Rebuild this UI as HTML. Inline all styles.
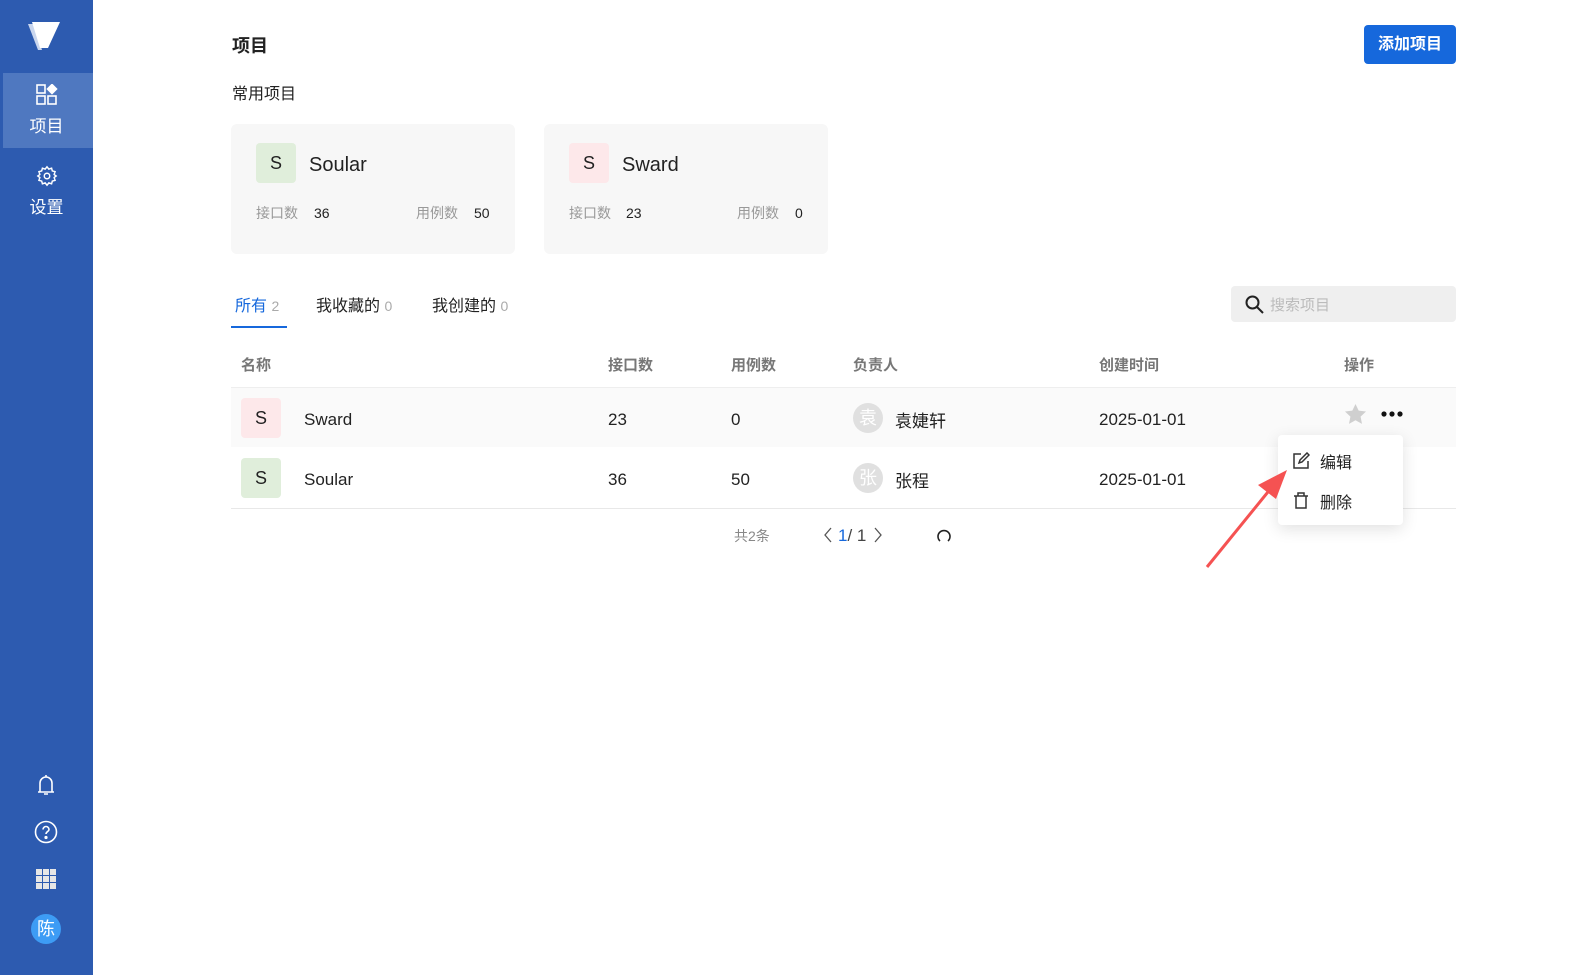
<!DOCTYPE html>
<html><head><meta charset="utf-8"><style>
*{box-sizing:border-box;margin:0;padding:0}
body{width:1595px;height:975px;background:#fff;font-family:"Liberation Sans","Noto Sans CJK SC",sans-serif;color:#222;position:relative;overflow:hidden}
.abs{position:absolute}
.side{left:0;top:0;width:93px;height:975px;background:#2d5bb0}
.act{left:3px;top:73px;width:90px;height:75px;background:#4f78c0}
.navt{width:93px;text-align:center;color:#fff;font-size:17px}
.card{background:#f7f7f7;border-radius:6px;width:284px;height:130px}
.sq{width:40px;height:40px;border-radius:4px;text-align:center;line-height:40px;font-size:18px;color:#222}
.g{background:#e0eedb}.p{background:#fde8ea}
.lbl{color:#999;font-size:14px}
.th{top:354px;font-size:15px;color:#777;font-weight:bold}
.td{font-size:17px;color:#222}
.av{width:30px;height:30px;border-radius:50%;background:#e0e0e0;color:#fff;text-align:center;line-height:30px;font-size:18px}
</style></head><body>
<div class="abs side"></div>
<div class="abs act"></div>
<svg class="abs" style="left:26px;top:18px" width="36" height="36" viewBox="0 0 36 36"><path d="M2 6 L12 32 L16 32 L8 6Z" fill="#c9d6ee"/><path d="M6 4 L34 4 L22 30 L14 30Z" fill="#fff"/></svg>
<svg class="abs" style="left:36px;top:84px" width="22" height="22" viewBox="0 0 22 22" fill="none" stroke="#fff" stroke-width="1.6"><rect x="1" y="1" width="8" height="8"/><rect x="1" y="12" width="8" height="8"/><rect x="12" y="12" width="8" height="8"/><path d="M16 0.5 L20.5 5 L16 9.5 L11.5 5Z" fill="#fff"/></svg>
<div class="abs navt" style="top:112px">项目</div>
<svg class="abs" style="left:36px;top:165px" width="22" height="22" viewBox="0 0 24 24" fill="none" stroke="#fff" stroke-width="1.6"><circle cx="12" cy="12" r="3"/><path d="M12 2l2 2.5 3-1 .8 3 3 .8-1 3L22 12l-2.2 1.7 1 3-3 .8-.8 3-3-1L12 22l-2-2.5-3 1-.8-3-3-.8 1-3L2 12l2.2-1.7-1-3 3-.8.8-3 3 1z"/></svg>
<div class="abs navt" style="top:193px">设置</div>
<svg class="abs" style="left:35px;top:773px" width="22" height="24" viewBox="0 0 22 24" fill="none" stroke="#fff" stroke-width="1.6"><path d="M5 19V10a6 6 0 0112 0v9zM3 19h16M9 21h4M11 2v2"/></svg>
<svg class="abs" style="left:34px;top:820px" width="24" height="24" viewBox="0 0 24 24" fill="none" stroke="#fff" stroke-width="1.6"><circle cx="12" cy="12" r="10.5"/><path d="M9 9.5a3 3 0 116 0c0 2-3 2-3 4.5"/><circle cx="12" cy="17.5" r=".8" fill="#fff"/></svg>
<svg class="abs" style="left:36px;top:869px" width="20" height="20" viewBox="0 0 20 20" fill="#e6e6e6"><rect x="0" y="0" width="6" height="6"/><rect x="7" y="0" width="6" height="6"/><rect x="14" y="0" width="6" height="6"/><rect x="0" y="7" width="6" height="6"/><rect x="7" y="7" width="6" height="6"/><rect x="14" y="7" width="6" height="6"/><rect x="0" y="14" width="6" height="6"/><rect x="7" y="14" width="6" height="6"/><rect x="14" y="14" width="6" height="6"/></svg>
<div class="abs" style="left:31px;top:914px;width:30px;height:30px;border-radius:50%;background:#3d9cf5;color:#fff;text-align:center;line-height:30px;font-size:18px">陈</div>

<div class="abs" style="left:232px;top:32px;font-size:18px;font-weight:bold">项目</div>
<div class="abs" style="left:1364px;top:25px;width:92px;height:39px;background:#1668dc;border-radius:4px;color:#fff;font-size:16px;font-weight:bold;text-align:center;line-height:39px">添加项目</div>
<div class="abs" style="left:232px;top:80px;font-size:16px">常用项目</div>

<div class="abs card" style="left:231px;top:124px"></div>
<div class="abs sq g" style="left:256px;top:143px">S</div>
<div class="abs" style="left:309px;top:154px;font-size:20px">Soular</div>
<div class="abs lbl" style="left:256px;top:203px">接口数</div><div class="abs" style="left:314px;top:205px;font-size:14px">36</div>
<div class="abs lbl" style="left:416px;top:203px">用例数</div><div class="abs" style="left:474px;top:205px;font-size:14px">50</div>

<div class="abs card" style="left:544px;top:124px"></div>
<div class="abs sq p" style="left:569px;top:143px">S</div>
<div class="abs" style="left:622px;top:154px;font-size:20px">Sward</div>
<div class="abs lbl" style="left:569px;top:203px">接口数</div><div class="abs" style="left:626px;top:205px;font-size:14px">23</div>
<div class="abs lbl" style="left:737px;top:203px">用例数</div><div class="abs" style="left:795px;top:205px;font-size:14px">0</div>

<div class="abs" style="left:235px;top:292px;font-size:16px;color:#1668dc">所有 <span style="color:#aaa;font-size:14px">2</span></div>
<div class="abs" style="left:231px;top:326px;width:56px;height:2px;background:#1668dc"></div>
<div class="abs" style="left:316px;top:292px;font-size:16px">我收藏的 <span style="color:#aaa;font-size:14px">0</span></div>
<div class="abs" style="left:432px;top:292px;font-size:16px">我创建的 <span style="color:#aaa;font-size:14px">0</span></div>

<div class="abs" style="left:1231px;top:286px;width:225px;height:36px;background:#efefef;border-radius:4px"></div>
<svg class="abs" style="left:1245px;top:295px" width="19" height="19" viewBox="0 0 19 19" fill="none" stroke="#222" stroke-width="2"><circle cx="7.5" cy="7.5" r="6"/><path d="M12 12l6 6"/></svg>
<div class="abs" style="left:1270px;top:294px;font-size:15px;color:#bbb">搜索项目</div>

<div class="abs th" style="left:241px">名称</div>
<div class="abs th" style="left:608px">接口数</div>
<div class="abs th" style="left:731px">用例数</div>
<div class="abs th" style="left:853px">负责人</div>
<div class="abs th" style="left:1099px">创建时间</div>
<div class="abs th" style="left:1344px">操作</div>
<div class="abs" style="left:231px;top:387px;width:1225px;height:1px;background:#eee"></div>
<div class="abs" style="left:231px;top:388px;width:1225px;height:59px;background:#fafafa"></div>
<div class="abs" style="left:231px;top:508px;width:1225px;height:1px;background:#e8e8e8"></div>

<div class="abs sq p" style="left:241px;top:398px">S</div>
<div class="abs td" style="left:304px;top:410px">Sward</div>
<div class="abs td" style="left:608px;top:410px">23</div>
<div class="abs td" style="left:731px;top:410px">0</div>
<div class="abs av" style="left:853px;top:403px">袁</div>
<div class="abs td" style="left:895px;top:407px">袁婕轩</div>
<div class="abs td" style="left:1099px;top:410px">2025-01-01</div>
<svg class="abs" style="left:1344px;top:403px" width="23" height="22" viewBox="0 0 24 23"><path d="M12 1l3.3 7 7.7.9-5.7 5.3 1.5 7.6L12 18l-6.8 3.8 1.5-7.6L1 8.9 8.7 8z" fill="#cfcfcf"/></svg>
<svg class="abs" style="left:1381px;top:411px" width="22" height="6"><circle cx="3" cy="3" r="2.6" fill="#111"/><circle cx="11" cy="3" r="2.6" fill="#111"/><circle cx="19" cy="3" r="2.6" fill="#111"/></svg>

<div class="abs sq g" style="left:241px;top:458px">S</div>
<div class="abs td" style="left:304px;top:470px">Soular</div>
<div class="abs td" style="left:608px;top:470px">36</div>
<div class="abs td" style="left:731px;top:470px">50</div>
<div class="abs av" style="left:853px;top:463px">张</div>
<div class="abs td" style="left:895px;top:467px">张程</div>
<div class="abs td" style="left:1099px;top:470px">2025-01-01</div>

<div class="abs" style="left:734px;top:526px;font-size:14px;color:#888">共2条</div>
<svg class="abs" style="left:823px;top:527px" width="10" height="16" viewBox="0 0 10 16" fill="none" stroke="#555" stroke-width="1.3"><path d="M8 1L2 8l6 7"/></svg>
<div class="abs" style="left:838px;top:526px;font-size:17px;color:#444"><span style="color:#1668dc">1</span>/ 1</div>
<svg class="abs" style="left:873px;top:527px" width="10" height="16" viewBox="0 0 10 16" fill="none" stroke="#555" stroke-width="1.3"><path d="M2 1l6 7-6 7"/></svg>
<svg class="abs" style="left:936px;top:527px" width="16" height="16" viewBox="0 0 16 16" fill="none" stroke="#222" stroke-width="1.6"><path d="M4 14A6 6 0 1112 14"/></svg>

<div class="abs" style="left:1278px;top:435px;width:125px;height:90px;background:#fff;border-radius:4px;box-shadow:0 4px 16px rgba(0,0,0,.12)"></div>
<svg class="abs" style="left:1293px;top:452px" width="17" height="17" viewBox="0 0 17 17" fill="none" stroke="#333" stroke-width="1.5"><path d="M8 2H1v14h14V9"/><path d="M6 11l1-3 7-7 2 2-7 7z"/></svg>
<div class="abs" style="left:1320px;top:449px;font-size:16px">编辑</div>
<svg class="abs" style="left:1293px;top:492px" width="16" height="17" viewBox="0 0 16 17" fill="none" stroke="#333" stroke-width="1.5"><path d="M1 4h14M5 4V1h6v3M3 4v12h10V4"/></svg>
<div class="abs" style="left:1320px;top:489px;font-size:16px">删除</div>

<svg class="abs" style="left:1200px;top:465px" width="95" height="110" viewBox="0 0 95 110"><path d="M7 102 L72 22" stroke="#f55252" stroke-width="3"/><path d="M87 5 L58 20 L76 34Z" fill="#f55252"/></svg>
</body></html>
